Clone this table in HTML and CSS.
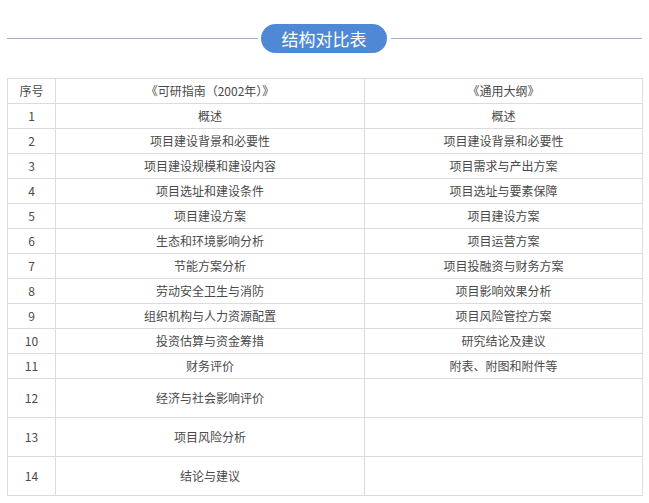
FILE: index.html
```html
<!DOCTYPE html>
<html lang="zh-CN">
<head>
<meta charset="utf-8">
<link rel="stylesheet" href="styles.css">
</head>
<body>
<div class="page">
  <div class="title-row">
    <span class="rule"></span>
    <span class="pill">结构对比表</span>
    <span class="rule"></span>
  </div>
  <table class="cmp">
    <colgroup>
      <col class="c1"><col class="c2"><col class="c3">
    </colgroup>
    <tr><td>序号</td><td>《可研指南（2002年）》</td><td>《通用大纲》</td></tr>
    <tr><td>1</td><td>概述</td><td>概述</td></tr>
    <tr><td>2</td><td>项目建设背景和必要性</td><td>项目建设背景和必要性</td></tr>
    <tr><td>3</td><td>项目建设规模和建设内容</td><td>项目需求与产出方案</td></tr>
    <tr><td>4</td><td>项目选址和建设条件</td><td>项目选址与要素保障</td></tr>
    <tr><td>5</td><td>项目建设方案</td><td>项目建设方案</td></tr>
    <tr><td>6</td><td>生态和环境影响分析</td><td>项目运营方案</td></tr>
    <tr><td>7</td><td>节能方案分析</td><td>项目投融资与财务方案</td></tr>
    <tr><td>8</td><td>劳动安全卫生与消防</td><td>项目影响效果分析</td></tr>
    <tr><td>9</td><td>组织机构与人力资源配置</td><td>项目风险管控方案</td></tr>
    <tr><td>10</td><td>投资估算与资金筹措</td><td>研究结论及建议</td></tr>
    <tr><td>11</td><td>财务评价</td><td>附表、附图和附件等</td></tr>
    <tr class="tall"><td>12</td><td>经济与社会影响评价</td><td></td></tr>
    <tr class="tall"><td>13</td><td>项目风险分析</td><td></td></tr>
    <tr class="tall"><td>14</td><td>结论与建议</td><td></td></tr>
  </table>
</div>
</body>
</html>
```
FILE: styles.css
```css
html, body {
  margin: 0;
  padding: 0;
  background: #ffffff;
}
body {
  font-family: "Noto Sans CJK SC", "Microsoft YaHei", sans-serif;
  color: #333333;
}
.page {
  padding: 24px 7px 0 7px;
}
.title-row {
  display: flex;
  align-items: center;
  gap: 3px;
  height: 29px;
}
.rule {
  flex: 1;
  height: 1px;
  background: #a3afc2;
}
.pill {
  width: 126px;
  height: 29px;
  border-radius: 15px;
  background: #4f89d5;
  color: #ffffff;
  font-size: 17px;
  line-height: 29px;
  text-align: center;
  margin-right: 1px;
}
.cmp {
  margin-top: 25px;
  width: 635px;
  border-collapse: collapse;
  table-layout: fixed;
  font-size: 12px;
}
.c1 { width: 48px; }
.c2 { width: 309px; }
.c3 { width: 278px; }
.cmp td {
  border: 1px solid #dcdcdc;
  height: 24px;
  padding: 0;
  text-align: center;
  vertical-align: middle;
  line-height: 16px;
  color: #4a4a4a;
}
.cmp tr.tall td {
  height: 38px;
}
```
